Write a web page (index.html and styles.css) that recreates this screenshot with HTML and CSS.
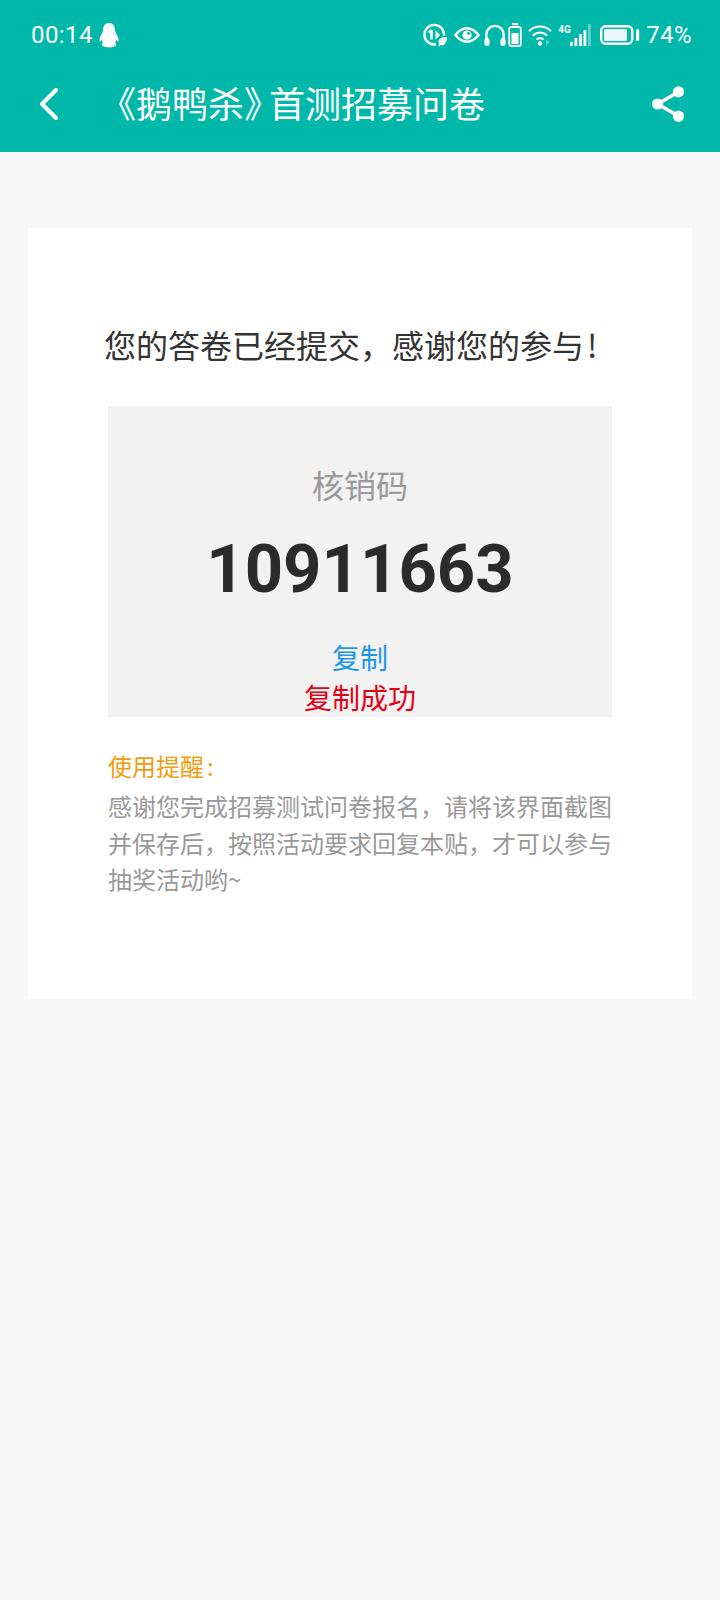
FILE: index.html
```html
<!DOCTYPE html>
<html lang="zh-CN">
<head>
<meta charset="utf-8">
<title>《鹅鸭杀》首测招募问卷</title>
<link rel="stylesheet" href="styles.css">
</head>
<body>
<header class="appbar">
  <div class="status">
    <div class="status-left">
      <span class="time">00:14</span>
      <svg class="qq" width="20" height="25" viewBox="0 0 20 25"><path fill="#fff" d="M10 0C6 0 4 3 4 7.500c0 1-.3 2-1 3-1.300 2-2.700 4.500-2.500 7 .1 1 .7 1.300 1.500.3.300-.4.600-.8.900-.8 0 1 .4 2 1.100 2.800-1 .7-1.500 1.500-1 2.300C3.500 23.500 7 24.500 10 24.500s6.500-1 7-2.400c.5-.8 0-1.600-1-2.300.7-.8 1.100-1.800 1.100-2.800.3 0 .6.400.9.800.8 1 1.400.7 1.500-.3.200-2.500-1.200-5-2.500-7-.7-1-1-2-1-3C16 3 14 0 10 0z"/></svg>
    </div>
    <div class="status-right">
      <svg class="ic-leaf" width="24" height="24" viewBox="0 0 24 24" fill="none" stroke="#fff" stroke-width="2.400"><path d="M13 21.300A9.800 9.800 0 1 1 21 12.500"/><path d="M8.500 7v9.500" stroke-width="2.600"/><path d="M5.500 9.500 8.500 7" stroke-width="1.800"/><path fill="#fff" stroke="none" d="M12.500 7.500v9l4.500-4.500z"/><path fill="#fff" stroke="none" d="M24 14c-4.500 0-8.500 1-8.500 5 0 .9.300 1.700.8 2.400-.5.500-.9 1-1.100 1.600l1 .5c.2-.5.600-1 1-1.400C21.500 23.500 24 19 24 14z"/></svg>
      <svg class="ic-eye" width="26" height="16" viewBox="0 0 26 16" fill="none" stroke="#fff" stroke-width="2.400"><path d="M1.500 8C5 3.500 9 1.300 13 1.300S21 3.500 24.500 8C21 12.500 17 14.700 13 14.700S5 12.500 1.500 8z"/><circle cx="13" cy="8" r="4.600" fill="#fff" stroke="none"/><circle cx="14.500" cy="6.500" r="1.400" fill="#00b8a9" stroke="none"/></svg>
      <svg class="ic-head" width="22" height="22" viewBox="0 0 22 22" fill="none" stroke="#fff" stroke-width="2.400"><path d="M2.400 15V10.500a8.600 8.600 0 0 1 17.200 0V15"/><rect x="0.500" y="14" width="5" height="8" rx="2.200" fill="#fff" stroke="none"/><rect x="16.500" y="14" width="5" height="8" rx="2.200" fill="#fff" stroke="none"/></svg>
      <svg width="14" height="24" viewBox="0 0 14 24" fill="none" stroke="#fff" stroke-width="1.800"><rect x="4" y="0" width="6" height="2.200" fill="#fff" stroke="none"/><rect x="1.200" y="4" width="11.600" height="19" rx="2"/><rect x="3.500" y="10" width="7" height="11" fill="#fff" stroke="none"/></svg>
      <svg class="ic-wifi" width="26" height="22" viewBox="0 0 26 22" fill="none" stroke="#fff" stroke-width="2.200"><path d="M1 7c6.500-6 15.500-6 22 0"/><path d="M4.800 11.500c4.500-4 10-4 14.400 0"/><path d="M8.500 15.500c2.300-1.800 4.700-1.800 7 0"/><circle cx="12" cy="19.500" r="2.200" fill="#fff" stroke="none"/><path d="M18 15.500v6l3.500-3z" fill="#fff" fill-opacity=".4" stroke="none"/></svg>
      <div class="signal">
        <span class="net">4G</span>
        <svg class="bars" width="21" height="22" viewBox="0 0 21 22" fill="#fff"><rect x="0" y="18" width="2.800" height="4"/><rect x="4.500" y="14" width="2.800" height="8"/><rect x="9" y="10" width="2.800" height="12"/><rect x="13.500" y="6" width="2.800" height="16"/><rect x="18" y="0" width="2.800" height="22" fill-opacity=".4"/></svg>
      </div>
      <svg class="battery" width="40" height="20" viewBox="0 0 40 20" fill="none"><rect x="1.200" y="1.200" width="31" height="17.600" rx="4.500" stroke="#fff" stroke-width="2.400"/><rect x="4" y="4" width="23" height="12" rx="1.500" fill="#fff" fill-opacity=".92"/><rect x="36" y="4" width="3.200" height="12" rx="1.500" fill="#fff"/></svg>
      <span class="pct">74%</span>
    </div>
  </div>
  <div class="toolbar">
    <svg class="back" width="18" height="32" viewBox="0 0 18 32" fill="none" stroke="#fff" stroke-width="4" stroke-linecap="round" stroke-linejoin="round"><path d="M16 2 2 16l14 14"/></svg>
    <h1 class="title">《鹅鸭杀<span class="tight">》</span>首测招募问卷</h1>
    <svg class="share" width="32" height="36" viewBox="0 0 32 36"><path d="M26.500 6 5.500 18l21 12" fill="none" stroke="#fff" stroke-width="3.500"/><circle cx="26.500" cy="5.800" r="5.600" fill="#fff"/><circle cx="5.600" cy="18" r="5.600" fill="#fff"/><circle cx="26.500" cy="30.200" r="5.600" fill="#fff"/></svg>
  </div>
</header>
<main class="page">
  <section class="card">
    <h2 class="heading">您的答卷已经提交&#65292;感谢您的参与<span class="bang">!</span></h2>
    <div class="code-box">
      <div class="code-label">核销码</div>
      <div class="code">10911663</div>
      <div class="copy">复制</div>
      <div class="copied">复制成功</div>
    </div>
    <div class="notice">
      <div class="notice-title">使用提醒<span class="colon">:</span></div>
      <p class="notice-text">感谢您完成招募测试问卷报名&#65292;请将该界面截图并保存后&#65292;按照活动要求回复本贴&#65292;才可以参与抽奖活动哟~</p>
    </div>
  </section>
</main>
</body>
</html>
```

FILE: styles.css
```css
* { box-sizing: border-box; }
html, body { margin: 0; padding: 0; }
body {
  width: 720px;
  height: 1600px;
  overflow: hidden;
  background: #f7f7f7;
  font-family: "Noto Sans CJK SC", "Noto Sans", sans-serif;
}
.appbar { height: 152px; background: #00b8a9; color: #fff; display: flex; flex-direction: column; }
.status { height: 70px; padding: 0 28px 0 31px; display: flex; align-items: center; justify-content: space-between; }
.status-left, .status-right { display: flex; align-items: center; }
.status-left { gap: 6px; }
.status-right { gap: 2px; }
.time, .pct { font-family: Roboto, sans-serif; font-size: 24px; letter-spacing: .4px; }
.ic-eye { margin-left: 5px; }
.ic-head { margin-left: 2px; }
.ic-wifi { margin-left: 4px; }
.signal { margin-left: 2px; display: flex; align-items: flex-start; gap: 1px; }
.net { width: 11px; font-family: Roboto, sans-serif; font-size: 10px; font-weight: 700; line-height: 12px; white-space: nowrap; }
.battery { margin-left: 7px; }
.pct { margin-left: 4px; }
.toolbar { flex: 1; display: flex; align-items: center; padding: 0 36px 0 40px; margin-top: -14px; }
.title { flex: 1; margin: 0 0 4px 42px; font-size: 36px; font-weight: 400; line-height: 44px; white-space: nowrap; }
.tight { letter-spacing: -11px; }
.page { padding: 76px 28px 0; }
.card { height: 771px; background: #fff; padding: 92px 80px 0; }
.heading { margin: 0 0 0 -4px; font-size: 32px; font-weight: 400; line-height: 48px; color: #333; white-space: nowrap; }
.bang { margin-left: 3px; }
.code-box { height: 311px; margin-top: 38px; background: #f2f2f2; text-align: center; padding-top: 54px; }
.code-label { font-size: 32px; line-height: 48px; color: #999; }
.code { margin-top: 20px; font-family: Roboto, sans-serif; font-size: 67px; font-weight: 700; line-height: 82px; color: #2b2b2b; }
.copy { margin-top: 27px; font-size: 28px; line-height: 40px; color: #1e96eb; }
.copied { font-size: 28px; line-height: 40px; color: #e60012; }
.notice { margin-top: 31px; }
.notice-title { font-size: 24px; line-height: 36px; color: #f39c12; }
.colon { margin-left: 3px; }
.notice-text { margin: 4px 0 0; font-size: 24px; line-height: 36.700px; color: #999; }
```
